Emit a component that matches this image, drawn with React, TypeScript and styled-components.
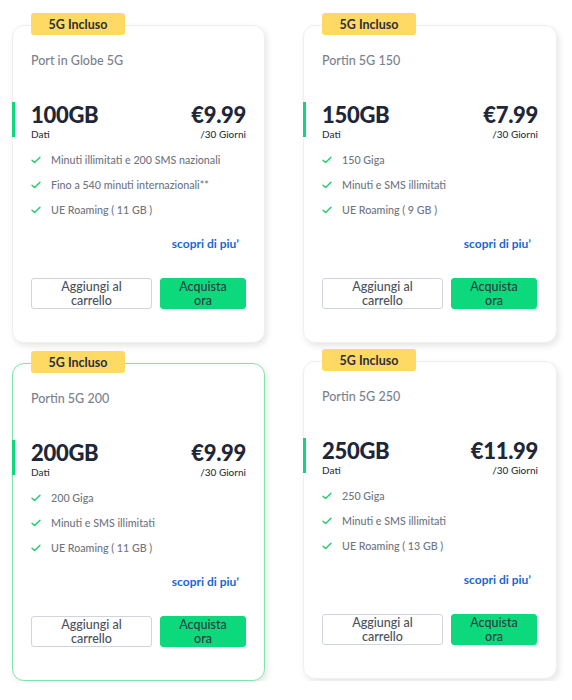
import React from "react";
import styled, { createGlobalStyle } from "styled-components";

const Global = createGlobalStyle`
  html, body { margin: 0; padding: 0; background: #ffffff; }
  body { font-family: Lato, "Noto Sans", sans-serif; -webkit-font-smoothing: antialiased; }
  * { box-sizing: border-box; }
`;

const Grid = styled.div`
  display: grid;
  grid-template-columns: 253px 254px;
  column-gap: 38px;
  row-gap: 8px;
  padding: 13px 0 0 12px;
`;

const Cell = styled.div<{ $shift?: number }>`
  position: relative;
  padding-top: 12px;
  margin-top: ${(p) => p.$shift ?? 0}px;
`;

const Card = styled.div<{ $active?: boolean }>`
  position: relative;
  height: 318px;
  border-radius: 12px;
  background: #fff;
  border: 1px solid ${(p) => (p.$active ? "#7fe6a8" : "#eeeff1")};
  box-shadow: 2px 3px 6px rgba(0, 0, 0, 0.1);
  padding: 27px 18px 0 18px;
  display: flex;
  flex-direction: column;
`;

const Badge = styled.div`
  position: absolute;
  top: 0;
  left: 19px;
  width: 94px;
  height: 22px;
  border-radius: 3px;
  background: #fed964;
  color: #2a2f3a;
  font-size: 12.5px;
  font-weight: 700;
  display: flex;
  align-items: center;
  justify-content: center;
  z-index: 1;
`;

const Title = styled.div`
  font-size: 12.5px;
  line-height: 16px;
  color: #7b818d;
  font-weight: 500;
`;

const Plan = styled.div`
  position: relative;
  margin-top: 33px;
  height: 35px;
  display: flex;
  justify-content: space-between;
  align-items: flex-start;
  &::before {
    content: "";
    position: absolute;
    left: -19px;
    top: 0;
    width: 3px;
    height: 35px;
    background: #0bd97b;
  }
`;

const Side = styled.div<{ $right?: boolean }>`
  display: flex;
  flex-direction: column;
  align-items: ${(p) => (p.$right ? "flex-end" : "flex-start")};
`;

const Big = styled.div`
  font-size: 22px;
  line-height: 22px;
  margin-top: 2px;
  font-weight: 900;
  color: #1e2638;
  letter-spacing: -0.3px;
`;

const Small = styled.div`
  margin-top: 3px;
  font-size: 10px;
  line-height: 11px;
  color: #2e3442;
  font-weight: 500;
`;

const Features = styled.ul`
  list-style: none;
  margin: 10px 0 0 0;
  padding: 0;
`;

const Feature = styled.li`
  display: flex;
  align-items: center;
  gap: 10px;
  height: 25px;
  font-size: 10.7px;
  color: #6f7581;
  font-weight: 500;
`;

const Check = () => (
  <svg width="10" height="8" viewBox="0 0 10 8" fill="none">
    <polyline points="1,4.2 3.6,6.6 9,1.2" stroke="#22cc6e" strokeWidth="1.4" strokeLinecap="round" strokeLinejoin="round" />
  </svg>
);

const More = styled.a`
  margin-top: 14px;
  align-self: flex-end;
  margin-right: 7px;
  font-size: 12px;
  line-height: 16px;
  font-weight: 700;
  color: #1668d6;
  text-decoration: none;
`;

const Buttons = styled.div`
  margin-top: 26px;
  display: flex;
  gap: 8px;
`;

const Btn = styled.button<{ $primary?: boolean }>`
  height: 31px;
  width: ${(p) => (p.$primary ? 86 : 121)}px;
  border-radius: 3px;
  border: 1px solid ${(p) => (p.$primary ? "#0bd97b" : "#cfd4dd")};
  background: ${(p) => (p.$primary ? "#0bd97b" : "#ffffff")};
  color: ${(p) => (p.$primary ? "#2f3a44" : "#4a505c")};
  font-family: Lato, "Noto Sans", sans-serif;
  font-size: 12.5px;
  line-height: 14px;
  font-weight: 500;
  padding: 0 4px;
  display: flex;
  flex-direction: column;
  align-items: center;
  justify-content: center;
  cursor: pointer;
`;

const Line = styled.span`
  display: block;
`;

type PlanData = {
  name: string;
  gb: string;
  price: string;
  features: string[];
  active?: boolean;
  shift?: number;
};

const plans: PlanData[] = [
  {
    name: "Port in Globe 5G",
    gb: "100GB",
    price: "€9.99",
    features: ["Minuti illimitati e 200 SMS nazionali", "Fino a 540 minuti internazionali**", "UE Roaming ( 11 GB )"],
  },
  {
    name: "Portin 5G 150",
    gb: "150GB",
    price: "€7.99",
    features: ["150 Giga", "Minuti e SMS illimitati", "UE Roaming ( 9 GB )"],
  },
  {
    name: "Portin 5G 200",
    gb: "200GB",
    price: "€9.99",
    features: ["200 Giga", "Minuti e SMS illimitati", "UE Roaming ( 11 GB )"],
    active: true,
  },
  {
    name: "Portin 5G 250",
    gb: "250GB",
    price: "€11.99",
    features: ["250 Giga", "Minuti e SMS illimitati", "UE Roaming ( 13 GB )"],
    shift: -2,
  },
];

export default function App() {
  return (
    <>
      <Global />
      <Grid>
        {plans.map((p) => (
          <Cell key={p.name} $shift={p.shift}>
            <Badge>5G Incluso</Badge>
            <Card $active={p.active}>
              <Title>{p.name}</Title>
              <Plan>
                <Side>
                  <Big>{p.gb}</Big>
                  <Small>Dati</Small>
                </Side>
                <Side $right>
                  <Big>{p.price}</Big>
                  <Small>/30 Giorni</Small>
                </Side>
              </Plan>
              <Features>
                {p.features.map((f) => (
                  <Feature key={f}>
                    <Check />
                    {f}
                  </Feature>
                ))}
              </Features>
              <More href="#">scopri di piu’</More>
              <Buttons>
                <Btn>
                  <Line>Aggiungi al</Line>
                  <Line>carrello</Line>
                </Btn>
                <Btn $primary>
                  <Line>Acquista</Line>
                  <Line>ora</Line>
                </Btn>
              </Buttons>
            </Card>
          </Cell>
        ))}
      </Grid>
    </>
  );
}
